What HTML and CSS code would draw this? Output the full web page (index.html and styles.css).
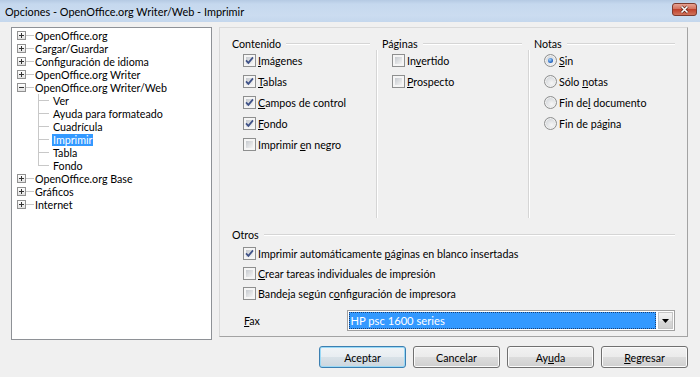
FILE: index.html
```html
<!DOCTYPE html>
<html lang="es">

<head>
    <meta charset="UTF-8">
    <title>Opciones - OpenOffice.org Writer/Web - Imprimir</title>
    <link rel="stylesheet" href="styles.css">
</head>

<body>
    <div class="window">
        <div class="titlebar">
            <span class="title">Opciones - OpenOffice.org Writer/Web - Imprimir</span>
            <span class="close-btn">
                <svg width="25" height="13" viewBox="0 0 25 13">
                    <defs>
                        <linearGradient id="closeGrad" x1="0" y1="0" x2="0" y2="1">
                            <stop offset="0" stop-color="#e9a697" />
                            <stop offset="0.5" stop-color="#d06c58" />
                            <stop offset="0.5" stop-color="#c0412c" />
                            <stop offset="1" stop-color="#d27860" />
                        </linearGradient>
                    </defs>
                    <rect x="0.5" y="0.5" width="24" height="12" rx="2.5" fill="url(#closeGrad)" stroke="#7d3a2e" />
                    <path d="M9.5 3.5 L15.5 9.5 M15.5 3.5 L9.5 9.5" stroke="#5b2319" stroke-width="3" />
                    <path d="M9.5 3.5 L15.5 9.5 M15.5 3.5 L9.5 9.5" stroke="#fff" stroke-width="1.6" />
                </svg>
            </span>
        </div>

        <div class="client">
            <div class="main">
                <div class="tree">
                    <div class="node"><span class="exp plus"></span><span class="branch"></span><span class="text">OpenOffice.org</span></div>
                    <div class="node"><span class="exp plus"></span><span class="branch"></span><span class="text">Cargar/Guardar</span></div>
                    <div class="node"><span class="exp plus"></span><span class="branch"></span><span class="text">Configuración de idioma</span></div>
                    <div class="node"><span class="exp plus"></span><span class="branch"></span><span class="text">OpenOffice.org Writer</span></div>
                    <div class="node"><span class="exp"></span><span class="branch"></span><span class="text">OpenOffice.org Writer/Web</span></div>
                    <div class="node child"><span class="twig"></span><span class="text">Ver</span></div>
                    <div class="node child"><span class="twig"></span><span class="text">Ayuda para formateado</span></div>
                    <div class="node child"><span class="twig"></span><span class="text">Cuadrícula</span></div>
                    <div class="node child"><span class="twig"></span><span class="text selected">Imprimir</span></div>
                    <div class="node child"><span class="twig"></span><span class="text">Tabla</span></div>
                    <div class="node child last"><span class="twig"></span><span class="text">Fondo</span></div>
                    <div class="node"><span class="exp plus"></span><span class="branch"></span><span class="text">OpenOffice.org Base</span></div>
                    <div class="node"><span class="exp plus"></span><span class="branch"></span><span class="text">Gráficos</span></div>
                    <div class="node"><span class="exp plus"></span><span class="branch"></span><span class="text">Internet</span></div>
                </div>

                <div class="page">
                    <div class="columns">
                        <div class="col">
                            <div class="legend">Contenido</div>
                            <div class="col-body">
                                <div class="opt"><span class="cb"><svg viewBox="0 0 11 11"><path d="M2 5.3 L4.4 7.9 L9 2.4" /></svg></span><span><u>I</u>mágenes</span></div>
                                <div class="opt"><span class="cb"><svg viewBox="0 0 11 11"><path d="M2 5.3 L4.4 7.9 L9 2.4" /></svg></span><span><u>T</u>ablas</span></div>
                                <div class="opt"><span class="cb"><svg viewBox="0 0 11 11"><path d="M2 5.3 L4.4 7.9 L9 2.4" /></svg></span><span><u>C</u>ampos de control</span></div>
                                <div class="opt"><span class="cb"><svg viewBox="0 0 11 11"><path d="M2 5.3 L4.4 7.9 L9 2.4" /></svg></span><span><u>F</u>ondo</span></div>
                                <div class="opt"><span class="cb"></span><span>Imprimir <u>e</u>n negro</span></div>
                            </div>
                        </div>
                        <div class="col">
                            <div class="legend">Páginas</div>
                            <div class="col-body">
                                <div class="opt"><span class="cb"></span><span>In<u>v</u>ertido</span></div>
                                <div class="opt"><span class="cb"></span><span><u>P</u>rospecto</span></div>
                            </div>
                        </div>
                        <div class="col">
                            <div class="legend">Notas</div>
                            <div class="col-body">
                                <div class="opt"><span class="rb on"></span><span><u>S</u>in</span></div>
                                <div class="opt"><span class="rb"></span><span>Sólo <u>n</u>otas</span></div>
                                <div class="opt"><span class="rb"></span><span>Fin de<u>l</u> documento</span></div>
                                <div class="opt"><span class="rb"></span><span>Fin de página</span></div>
                            </div>
                        </div>
                    </div>

                    <div class="otros">
                        <div class="legend">Otros</div>
                        <div class="otros-body">
                            <div class="opt"><span class="cb"><svg viewBox="0 0 11 11"><path d="M2 5.3 L4.4 7.9 L9 2.4" /></svg></span><span>Imprimir automáticamente <u>p</u>áginas en blanco insertadas</span></div>
                            <div class="opt"><span class="cb"></span><span><u>C</u>rear tareas individuales de impresión</span></div>
                            <div class="opt"><span class="cb"></span><span>Bandeja según c<u>o</u>nfiguración de impresora</span></div>
                        </div>
                    </div>

                    <div class="fax-row">
                        <span class="fax-label"><u>F</u>ax</span>
                        <div class="combo">
                            <span class="combo-value">HP psc 1600 series</span>
                            <span class="combo-arrow"><svg width="7" height="4" viewBox="0 0 7 4"><path d="M0 0 H7 L3.5 4 Z" /></svg></span>
                        </div>
                    </div>
                </div>
            </div>

            <div class="buttons">
                <button class="btn default">Aceptar</button>
                <button class="btn">Cancelar</button>
                <button class="btn">Ay<u>u</u>da</button>
                <button class="btn"><u>R</u>egresar</button>
            </div>
        </div>
    </div>
</body>

</html>
```

FILE: styles.css
```css
body {
    margin: 0;
    font-family: Lato, "Liberation Sans", sans-serif;
    font-size: 10.7px;
    color: #000;
    background: #f0f0f0;
}

.window {
    width: 700px;
    height: 377px;
    box-sizing: border-box;
    overflow: hidden;
    background: #f0f0f0;
}

/* window caption */
.titlebar {
    height: 22px;
    box-sizing: border-box;
    display: flex;
    align-items: center;
    justify-content: space-between;
    padding: 0 3px 0 5px;
    background: linear-gradient(#b5cae3, #c5d8ee 4px, #cbdcf0 70%, #c4d7ed);
}

.title {
    font-size: 10.9px;
}

.close-btn {
    display: flex;
    margin-top: -3px;
}

.client {
    padding: 5px 12px 0 11px;
}

.main {
    display: flex;
    gap: 7px;
}

/* options tree */
.tree {
    width: 201px;
    height: 313px;
    box-sizing: border-box;
    border: 1px solid #8e9196;
    background: #fff;
    padding-top: 1px;
}

.node {
    display: flex;
    align-items: center;
    height: 13px;
}

.exp {
    flex: none;
    width: 9px;
    height: 9px;
    box-sizing: border-box;
    margin-left: 5px;
    border: 1px solid #919191;
    background: linear-gradient(#333, #333) center / 5px 1px no-repeat,
        linear-gradient(#fff, #e2e2e2);
}

.exp.plus {
    background: linear-gradient(#333, #333) center / 5px 1px no-repeat,
        linear-gradient(#333, #333) center / 1px 5px no-repeat,
        linear-gradient(#fff, #e2e2e2);
}

.branch {
    flex: none;
    width: 8px;
    height: 1px;
    background: #c8c8c8;
}

.twig {
    flex: none;
    width: 11px;
    height: 13px;
    margin-left: 26px;
    background: linear-gradient(#c8c8c8, #c8c8c8) left top / 1px 100% no-repeat,
        linear-gradient(#c8c8c8, #c8c8c8) left 6px / 100% 1px no-repeat;
}

.node.last .twig {
    background: linear-gradient(#c8c8c8, #c8c8c8) left top / 1px 7px no-repeat,
        linear-gradient(#c8c8c8, #c8c8c8) left 6px / 100% 1px no-repeat;
}

.text {
    padding: 0 1px;
    line-height: 12px;
    white-space: nowrap;
}

.child .text {
    margin-left: 3px;
}

.text.selected {
    background: #3399ff;
    color: #fff;
}

/* tab page */
.page {
    width: 469px;
    height: 310px;
    box-sizing: border-box;
    border: 1px solid;
    border-color: #d9d9d9 #a3a3a3 #a3a3a3 #d9d9d9;
    padding: 9px 12px 0 12px;
}

.columns {
    display: grid;
    grid-template-columns: 138px 146px 147px;
    column-gap: 6px;
}

.legend {
    display: flex;
    align-items: center;
    gap: 5px;
    height: 13px;
    line-height: 13px;
}

.legend::after {
    content: "";
    flex: 1;
    border-top: 1px solid #d5d5d5;
    border-bottom: 1px solid #fff;
}

.col-body {
    height: 168px;
    padding-left: 11px;
}

.col + .col .legend {
    padding-left: 6px;
}

.col + .col .col-body {
    border-left: 1px solid #d5d5d5;
    box-shadow: inset 1px 0 #fff;
    padding-left: 15px;
}

.opt {
    display: flex;
    align-items: center;
    gap: 2px;
    height: 21px;
    white-space: nowrap;
}

.otros {
    margin-top: 10px;
}

.otros-body {
    margin-top: 2px;
    padding-left: 11px;
}

.otros .opt {
    height: 20px;
}

u {
    text-underline-offset: 1px;
}

/* checkbox and radio */
.cb {
    flex: none;
    display: flex;
    width: 13px;
    height: 13px;
    box-sizing: border-box;
    border: 1px solid #8e8f8f;
    padding: 2px;
    background: linear-gradient(135deg, #c6cacf, #f4f4f4) content-box, #f5f5f5;
}

.cb svg {
    display: block;
    width: 11px;
    height: 11px;
    margin: -2px;
}

.cb path {
    fill: none;
    stroke: #3f5288;
    stroke-width: 1.7;
}

.rb {
    flex: none;
    display: flex;
    align-items: center;
    justify-content: center;
    width: 13px;
    height: 13px;
    box-sizing: border-box;
    border: 1px solid #8e8f8f;
    border-radius: 50%;
    background: radial-gradient(circle at 60% 65%, #f7f7f7, #d2d5d9 75%);
    box-shadow: inset 0 0 0 1px #f2f2f2;
}

.rb.on::after {
    content: "";
    width: 5px;
    height: 5px;
    border-radius: 50%;
    background: radial-gradient(circle at 40% 35%, #a9d6fb, #2a6cc6 60%, #173f8c);
}

/* fax combobox */
.fax-row {
    display: flex;
    align-items: center;
    margin-top: 7px;
    padding-left: 12px;
}

.fax-label {
    width: 103px;
}

.combo {
    display: flex;
    gap: 2px;
    width: 330px;
    height: 21px;
    box-sizing: border-box;
    border: 1px solid #a0a0a0;
    padding: 1px;
    background: #fff;
}

.combo-value {
    flex: 1;
    box-sizing: border-box;
    border: 1px dotted #1b3f73;
    background: #3399ff;
    color: #fff;
    padding-left: 1px;
    line-height: 15px;
    font-size: 11.2px;
}

.combo-arrow {
    flex: none;
    display: flex;
    align-items: center;
    justify-content: center;
    width: 15px;
    box-sizing: border-box;
    border: 1px solid #c5c5c5;
    background: linear-gradient(#f4f4f4, #e6e6e6 50%, #d8d8d8 50%, #d0d0d0);
}

/* dialog buttons */
.buttons {
    display: flex;
    justify-content: flex-end;
    gap: 7px;
    margin-top: 6px;
}

.btn {
    width: 87px;
    height: 22px;
    box-sizing: border-box;
    padding: 0;
    border: 1px solid #707070;
    border-radius: 3px;
    background: linear-gradient(#f2f2f2, #ebebeb 50%, #dddddd 50%, #cfcfcf);
    box-shadow: inset 0 0 0 1px #fbfbfb;
    font: inherit;
    color: #000;
}

.btn.default {
    border-color: #3c7fb1;
    box-shadow: inset 0 0 0 1px #9ad9f6;
    background: linear-gradient(#f0f4f7, #e8edf1 50%, #d9e2e8 50%, #ccd6de);
}
```
